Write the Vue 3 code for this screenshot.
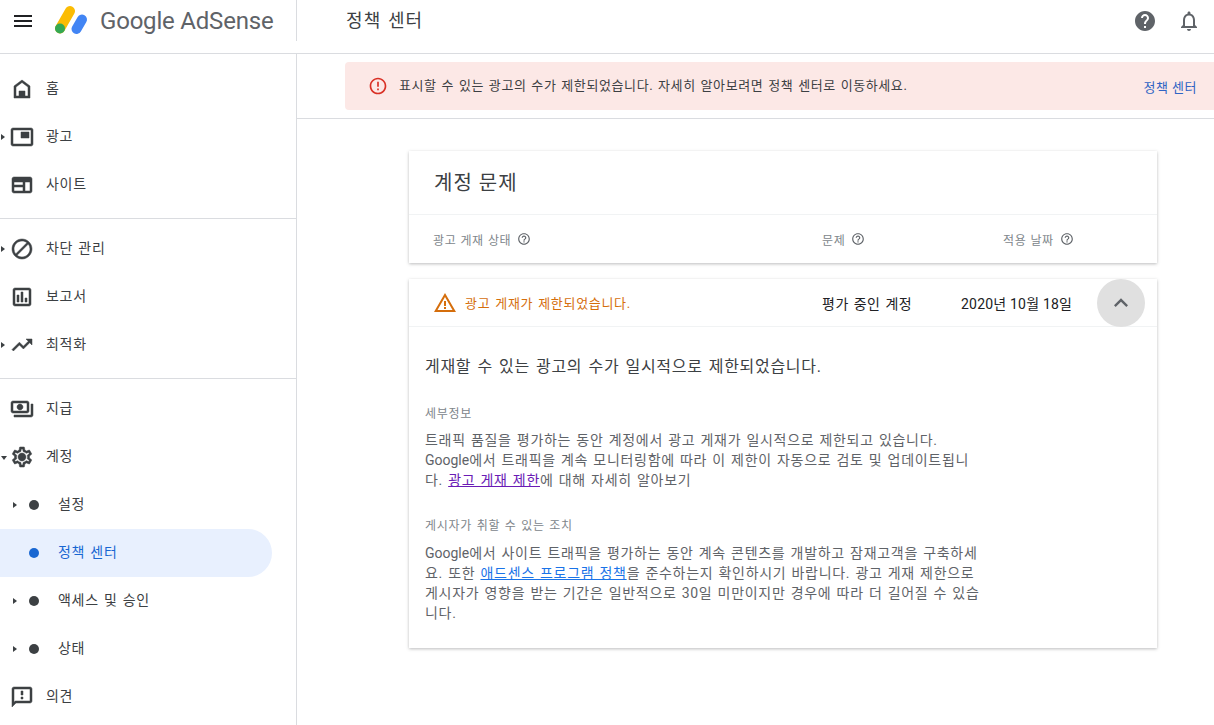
<script setup>
const groups = [
  [
    { label: '홈', icon: 'home' },
    { label: '광고', icon: 'ads', arrow: 'right' },
    { label: '사이트', icon: 'site' },
  ],
  [
    { label: '차단 관리', icon: 'block', arrow: 'right' },
    { label: '보고서', icon: 'report' },
    { label: '최적화', icon: 'trend', arrow: 'right' },
  ],
  [
    { label: '지급', icon: 'pay' },
    { label: '계정', icon: 'gear', arrow: 'down' },
    { label: '설정', sub: true, arrow: 'right' },
    { label: '정책 센터', sub: true, active: true },
    { label: '액세스 및 승인', sub: true, arrow: 'right' },
    { label: '상태', sub: true, arrow: 'right' },
    { label: '의견', icon: 'feedback' },
  ],
]
const hint = 'M11 18h2v-2h-2v2zm1-16C6.48 2 2 6.48 2 12s4.48 10 10 10 10-4.48 10-10S17.52 2 12 2zm0 18c-4.41 0-8-3.59-8-8s3.59-8 8-8 8 3.59 8 8-3.59 8-8 8zm0-14c-2.21 0-4 1.79-4 4h2c0-1.1.9-2 2-2s2 .9 2 2c0 2-3 1.75-3 5h2c0-2.25 3-2.5 3-5 0-2.21-1.79-4-4-4z'
const paths = {
  home: 'M12 3 4 9v12h16V9l-8-6zm6 16h-3v-5H9v5H6v-9l6-4.5 6 4.5v9z',
  ads: 'M21 3H3c-1.1 0-2 .9-2 2v14c0 1.1.9 2 2 2h18c1.1 0 2-.9 2-2V5c0-1.1-.9-2-2-2zm0 16H3V5h18v14zM11 7h8v6h-8z',
  site: 'M20 4H4c-1.1 0-2 .9-2 2v12c0 1.1.9 2 2 2h16c1.1 0 2-.9 2-2V6c0-1.1-.9-2-2-2zM4 18v-4h9v4H4zm11 0v-9h5v9h-5zM4 12V9h9v3H4z',
  block: 'M12 2C6.48 2 2 6.48 2 12s4.48 10 10 10 10-4.48 10-10S17.52 2 12 2zM4 12c0-4.42 3.58-8 8-8 1.85 0 3.55.63 4.9 1.69L5.69 16.9A7.902 7.902 0 0 1 4 12zm8 8c-1.85 0-3.55-.63-4.9-1.69L18.31 7.1A7.902 7.902 0 0 1 20 12c0 4.42-3.58 8-8 8z',
  report: 'M19 3H5c-1.1 0-2 .9-2 2v14c0 1.1.9 2 2 2h14c1.1 0 2-.9 2-2V5c0-1.1-.9-2-2-2zm0 16H5V5h14v14zM7 10h2v7H7zm4-3h2v10h-2zm4 6h2v4h-2z',
  trend: 'm16 6 2.29 2.29-4.88 4.88-4-4L2 16.59 3.41 18l6-6 4 4 6.3-6.29L22 12V6z',
  pay: 'M19 14V6c0-1.1-.9-2-2-2H3c-1.1 0-2 .9-2 2v8c0 1.1.9 2 2 2h14c1.1 0 2-.9 2-2zm-2 0H3V6h14v8zm-7-7c-1.66 0-3 1.34-3 3s1.34 3 3 3 3-1.34 3-3-1.34-3-3-3zm13 0v11c0 1.1-.9 2-2 2H4v-2h17V7h2z',
  gear: 'M19.43 12.98c.04-.32.07-.64.07-.98s-.03-.66-.07-.98l2.11-1.65c.19-.15.24-.42.12-.64l-2-3.46a.5.5 0 0 0-.61-.22l-2.49 1c-.52-.4-1.08-.73-1.69-.98l-.38-2.65A.49.49 0 0 0 14 2h-4c-.25 0-.46.18-.49.42l-.38 2.65c-.61.25-1.17.59-1.69.98l-2.49-1a.5.5 0 0 0-.61.22l-2 3.46c-.13.22-.07.49.12.64l2.11 1.65c-.04.32-.07.65-.07.98s.03.66.07.98l-2.11 1.65c-.19.15-.24.42-.12.64l2 3.46c.12.22.39.3.61.22l2.49-1c.52.4 1.08.73 1.69.98l.38 2.65c.03.24.24.42.49.42h4c.25 0 .46-.18.49-.42l.38-2.65c.61-.25 1.17-.59 1.69-.98l2.49 1c.23.09.49 0 .61-.22l2-3.46c.12-.22.07-.49-.12-.64l-2.11-1.65zm-1.98-1.71c.04.31.05.52.05.73s-.02.43-.05.73l-.14 1.13.89.7 1.08.84-.7 1.21-1.27-.51-1.04-.42-.9.68c-.43.32-.84.56-1.25.73l-1.06.43-.16 1.13-.2 1.35h-1.4l-.19-1.35-.16-1.13-1.06-.43c-.43-.18-.83-.41-1.23-.71l-.91-.7-1.06.43-1.27.51-.7-1.21 1.08-.84.89-.7-.14-1.13c-.03-.31-.05-.54-.05-.74s.02-.43.05-.73l.14-1.13-.89-.7-1.08-.84.7-1.21 1.27.51 1.04.42.9-.68c.43-.32.84-.56 1.25-.73l1.06-.43.16-1.13.2-1.35h1.39l.19 1.35.16 1.13 1.06.43c.43.18.83.41 1.23.71l.91.7 1.06-.43 1.27-.51.7 1.21-1.07.85-.89.7.14 1.13zM12 8c-2.21 0-4 1.79-4 4s1.79 4 4 4 4-1.79 4-4-1.79-4-4-4z',
  feedback: 'M20 2H4c-1.1 0-2 .9-2 2v18l4-4h14c1.1 0 2-.9 2-2V4c0-1.1-.9-2-2-2zm0 14H5.17L4 17.17V4h16v12zM11 12h2v2h-2zm0-6h2v4h-2z',
}
</script>

<template>
  <div class="page">
    <header class="topbar">
      <div class="brand">
        <svg class="menu" viewBox="0 0 24 24" width="24" height="24"><path d="M3 18h18v-2H3v2zm0-5h18v-2H3v2zm0-7v2h18V6H3z" /></svg>
        <svg class="logo" viewBox="0 0 34 31" width="34" height="31">
          <path d="M15 6 5 23.5" stroke="#fbbc04" stroke-width="10" stroke-linecap="round" fill="none" />
          <path d="M27 14.5 21.5 24" stroke="#4285f4" stroke-width="10" stroke-linecap="round" fill="none" />
          <circle cx="5" cy="23.5" r="5" fill="#34a853" />
        </svg>
        <span class="wordmark">Google AdSense</span>
      </div>
      <h1 class="page-title">정책 센터</h1>
      <div class="top-icons">
        <svg viewBox="0 0 24 24" width="24" height="24"><path fill="#5f6368" d="M12 2C6.48 2 2 6.48 2 12s4.48 10 10 10 10-4.48 10-10S17.52 2 12 2zm1 17h-2v-2h2v2zm2.07-7.75-.9.92C13.45 12.9 13 13.5 13 15h-2v-.5c0-1.1.45-2.1 1.17-2.83l1.24-1.26c.37-.36.59-.86.59-1.41 0-1.1-.9-2-2-2s-2 .9-2 2H8c0-2.21 1.79-4 4-4s4 1.79 4 4c0 .88-.36 1.68-.93 2.25z" /></svg>
        <svg viewBox="0 0 24 24" width="24" height="24"><path fill="#5f6368" d="M12 22c1.1 0 2-.9 2-2h-4c0 1.1.9 2 2 2zm6-6v-5c0-3.07-1.63-5.64-4.5-6.32V4c0-.83-.67-1.5-1.5-1.5s-1.5.67-1.5 1.5v.68C7.64 5.36 6 7.92 6 11v5l-2 2v1h16v-1l-2-2zm-2 1H8v-6c0-2.48 1.51-4.5 4-4.5s4 2.02 4 4.5v6z" /></svg>
      </div>
    </header>

    <div class="body">
      <nav class="sidebar">
        <div v-for="(group, g) in groups" :key="g" class="nav-group">
          <div v-for="item in group" :key="item.label" class="nav-item" :class="{ active: item.active, sub: item.sub }">
            <i v-if="item.arrow" class="arrow" :class="item.arrow"></i>
            <span v-if="item.sub" class="dot"></span>
            <svg v-else class="nav-icon" viewBox="0 0 24 24" width="24" height="24"><path :d="paths[item.icon]" /></svg>
            <span class="nav-label">{{ item.label }}</span>
          </div>
        </div>
      </nav>

      <main class="main">
        <div class="banner-row">
          <div class="banner">
            <svg viewBox="0 0 24 24" width="20" height="20"><path fill="#d93025" d="M11 15h2v2h-2zm0-8h2v6h-2zm1-5C6.47 2 2 6.48 2 12s4.47 10 10 10c5.52 0 10-4.48 10-10S17.52 2 12 2zm0 18c-4.42 0-8-3.58-8-8s3.58-8 8-8 8 3.58 8 8-3.58 8-8 8z" /></svg>
            <span class="banner-text">표시할 수 있는 광고의 수가 제한되었습니다. 자세히 알아보려면 정책 센터로 이동하세요.</span>
            <a class="banner-link">정책 센터</a>
          </div>
        </div>

        <div class="content">
          <section class="card summary">
            <h2 class="card-title">계정 문제</h2>
            <div class="cols head">
              <span class="col-status">광고 게재 상태 <svg class="hint" viewBox="0 0 24 24" width="14" height="14"><path :d="hint" /></svg></span>
              <span class="col-issue">문제 <svg class="hint" viewBox="0 0 24 24" width="14" height="14"><path :d="hint" /></svg></span>
              <span class="col-date">적용 날짜 <svg class="hint" viewBox="0 0 24 24" width="14" height="14"><path :d="hint" /></svg></span>
            </div>
          </section>

          <section class="card detail">
            <div class="cols row">
              <span class="col-status warn">
                <svg viewBox="0 0 24 24" width="24" height="24"><path fill="#d56e0c" d="M1 21h22L12 2 1 21zm3.47-2L12 6l7.53 13H4.47zM11 16h2v2h-2zm0-6h2v5h-2z" /></svg>
                광고 게재가 제한되었습니다.
              </span>
              <span class="col-issue strong">평가 중인 계정</span>
              <span class="col-date strong date">2020년 10월 18일</span>
              <span class="collapse">
                <svg viewBox="0 0 24 24" width="28" height="28"><path fill="#5f6368" d="M7.41 15.41 12 10.83l4.59 4.58L18 14l-6-6-6 6z" /></svg>
              </span>
            </div>
            <div class="detail-body">
              <h3 class="lead">게재할 수 있는 광고의 수가 일시적으로 제한되었습니다.</h3>
              <h4 class="label">세부정보</h4>
              <p class="para">트래픽 품질을 평가하는 동안 계정에서 광고 게재가 일시적으로 제한되고 있습니다. <span class="latin">Google</span>에서 트래픽을 계속 모니터링함에 따라 이 제한이 자동으로 검토 및 업데이트됩니다. <a class="visited">광고 게재 제한</a>에 대해 자세히 알아보기</p>
              <h4 class="label second">게시자가 취할 수 있는 조치</h4>
              <p class="para last"><span class="latin">Google</span>에서 사이트 트래픽을 평가하는 동안 계속 콘텐츠를 개발하고 잠재고객을 구축하세요. 또한 <a class="link">애드센스 프로그램 정책</a>을 준수하는지 확인하시기 바랍니다. 광고 게재 제한으로 게시자가 영향을 받는 기간은 일반적으로 30일 미만이지만 경우에 따라 더 길어질 수 있습니다.</p>
            </div>
          </section>
        </div>
      </main>
    </div>
  </div>
</template>

<style scoped>
.page {
  width: 1214px;
  height: 725px;
  overflow: hidden;
  background: #fff;
  color: #3c4043;
  font-family: Roboto, "Noto Sans CJK KR", sans-serif;
  font-size: 14px;
}
.topbar {
  height: 53px;
  display: flex;
  align-items: flex-start;
  border-bottom: 1px solid #dadce0;
}
.brand {
  width: 297px;
  height: 41px;
  flex: none;
  box-sizing: border-box;
  display: flex;
  align-items: center;
  padding-left: 11px;
  border-right: 1px solid #dadce0;
}
.menu { fill: #202124; }
.logo { margin-left: 20px; }
.wordmark {
  margin-left: 11px;
  font-size: 24px;
  color: #5f6368;
  letter-spacing: -0.2px;
}
.page-title {
  margin: 0 0 0 49px;
  font-size: 18px;
  line-height: 42px;
  font-weight: 400;
  letter-spacing: 1.1px;
  word-spacing: 1px;
  color: #3c4043;
}
.top-icons {
  margin-left: auto;
  display: flex;
  gap: 20px;
  padding: 9px 13px 0 0;
}
.body { display: flex; height: 671px; }
.sidebar {
  width: 296px;
  flex: none;
  border-right: 1px solid #dadce0;
  padding-top: 11px;
}
.nav-group {
  padding-bottom: 9px;
  margin-bottom: 6px;
  border-bottom: 1px solid #dadce0;
}
.nav-group:last-child { border-bottom: 0; }
.nav-item {
  position: relative;
  height: 48px;
  width: 272px;
  display: flex;
  align-items: center;
  padding-left: 10px;
  box-sizing: border-box;
  border-radius: 0 24px 24px 0;
}
.nav-item.sub { padding-left: 29px; }
.nav-item.active { background: #e8f0fe; color: #1967d2; }
.nav-icon { fill: #3c4043; stroke: #3c4043; stroke-width: .5; flex: none; }
.nav-label { margin: 0 0 4px 12px; letter-spacing: .7px; word-spacing: 1px; }
.sub .nav-label { margin-left: 19px; }
.dot {
  width: 10px;
  height: 10px;
  border-radius: 50%;
  background: #3c4043;
  flex: none;
}
.active .dot { background: #1967d2; }
.arrow {
  position: absolute;
  width: 0;
  height: 0;
  left: 1px;
  top: 21px;
  border-style: solid;
  border-color: transparent;
  border-width: 3px 0 3px 4px;
  border-left-color: #3c4043;
}
.sub .arrow { left: 13px; }
.arrow.down {
  top: 23px;
  border-width: 4px 3px 0;
  border-color: #3c4043 transparent transparent;
}
.main { flex: 1; min-width: 0; }
.banner-row {
  height: 65px;
  padding-top: 8px;
  box-sizing: border-box;
  border-bottom: 1px solid #dadce0;
  padding-left: 48px;
}
.banner {
  height: 48px;
  display: flex;
  align-items: center;
  background: #fce8e6;
  border-radius: 4px 0 0 4px;
  padding: 0 17px 0 23px;
}
.banner-text { margin: 0 0 4px 11px; font-size: 13px; letter-spacing: .6px; word-spacing: 1px; }
.banner-link { margin: 0 0 0 auto; color: #2f64c4; font-size: 13px; letter-spacing: .5px; }
.content { padding: 32px 57px 0 112px; }
.card {
  background: #fff;
  box-shadow: 0 1px 3px rgba(60, 64, 67, .35);
}
.summary { height: 112px; margin-bottom: 16px; }
.card-title {
  margin: 0;
  height: 63px;
  padding-left: 25px;
  line-height: 65px;
  font-size: 20px;
  font-weight: 400;
  letter-spacing: 1px;
  color: #3c4043;
  border-bottom: 1px solid #f1f3f4;
}
.cols { display: flex; align-items: center; position: relative; }
.head { height: 48px; font-size: 12px; color: #80868b; letter-spacing: .6px; word-spacing: .6px; }
.col-status { width: 389px; padding-left: 24px; display: flex; align-items: center; gap: 6px; flex: none; }
.col-issue { width: 181px; display: flex; align-items: center; gap: 6px; flex: none; }
.col-date { display: flex; align-items: center; gap: 6px; }
.hint { fill: #5f6368; flex: none; }
.detail { height: 369px; }
.row { height: 47px; border-bottom: 1px solid #f1f3f4; }
.warn { color: #d56e0c; font-size: 13px; letter-spacing: .7px; word-spacing: 1px; gap: 8px; }
.strong { color: #202124; font-size: 14px; letter-spacing: .5px; word-spacing: 1px; }
.date { margin-left: -42px; letter-spacing: .2px; word-spacing: 0; }
.collapse {
  position: absolute;
  right: 12px;
  top: 0;
  width: 48px;
  height: 48px;
  border-radius: 50%;
  background: #e0e0e0;
  display: flex;
  align-items: center;
  justify-content: center;
}
.detail-body { padding: 28px 16px 0; }
.lead { margin: 0; font-size: 16px; font-weight: 400; color: #3c4043; line-height: 24px; letter-spacing: .7px; word-spacing: 1.5px; }
.label { margin: 27px 0 0; font-size: 12px; font-weight: 400; color: #80868b; line-height: 16px; letter-spacing: .7px; word-spacing: 1px; }
.label.second { margin-top: 28px; }
.para { margin: 8px 0 0; width: 562px; font-size: 14px; line-height: 20px; color: #5f6368; letter-spacing: .7px; word-spacing: 1px; }
.para.last { margin-top: 9px; }
.latin { letter-spacing: 0; }
.visited { color: #6a1bb5; text-decoration: underline; }
.link { color: #1a73e8; text-decoration: underline; }
</style>
